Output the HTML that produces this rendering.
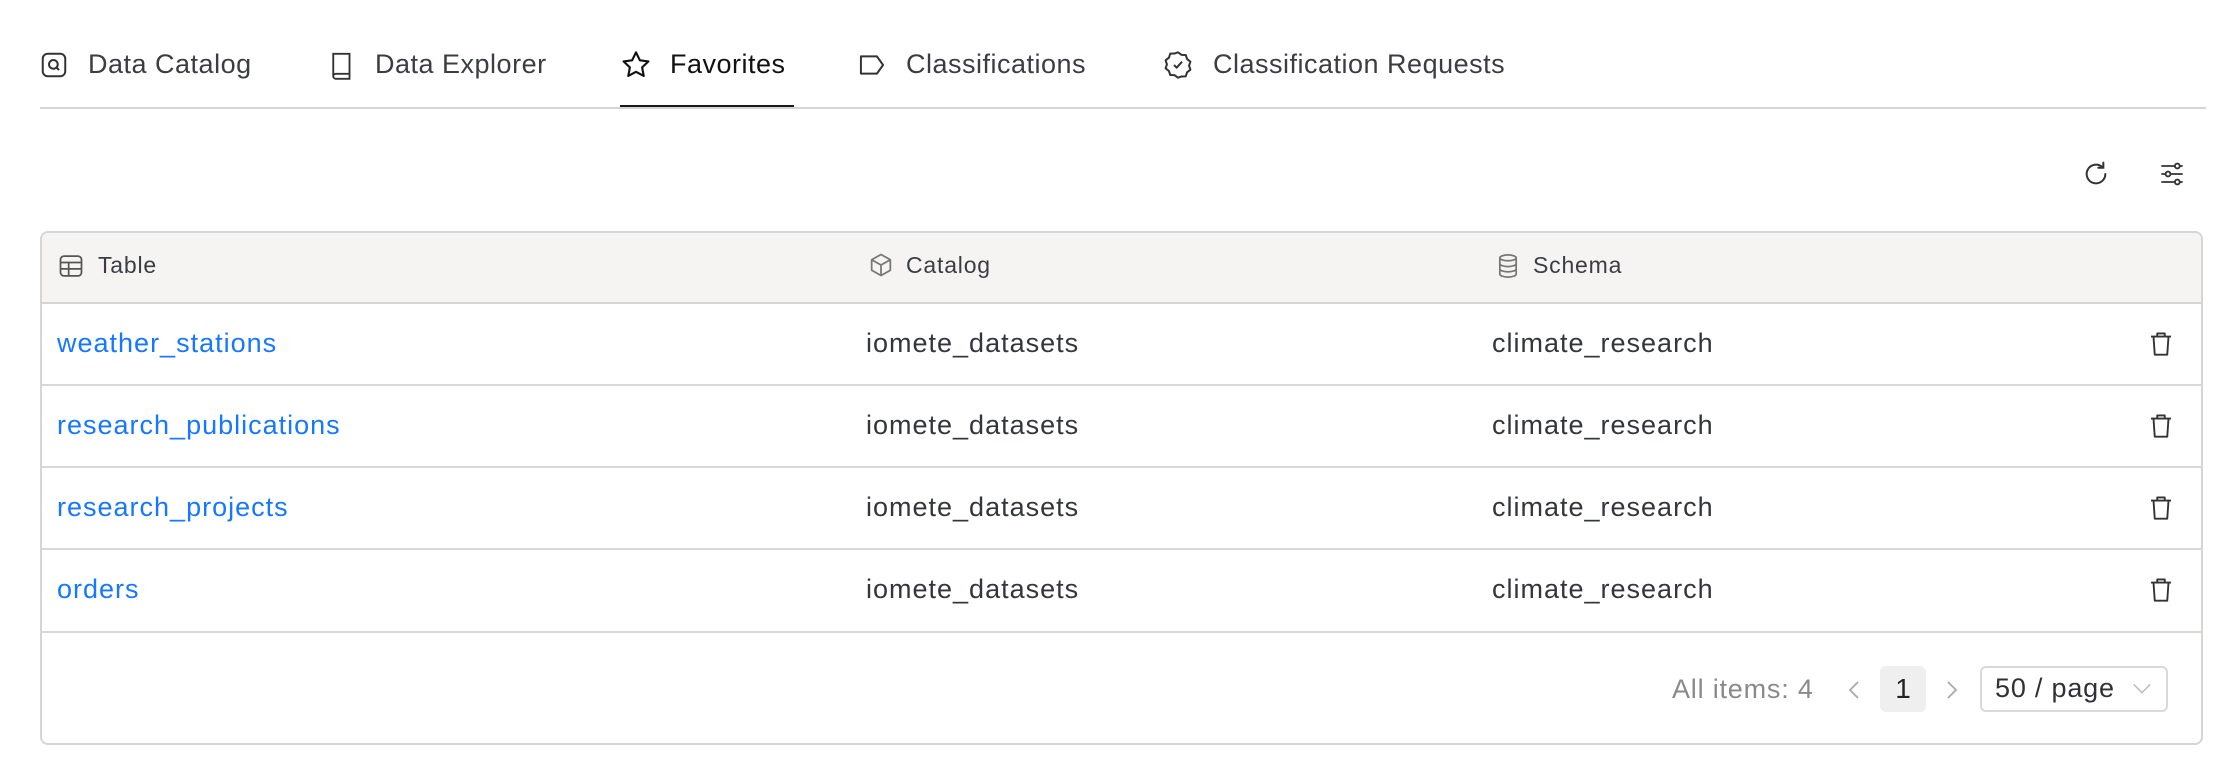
<!DOCTYPE html>
<html><head><meta charset="utf-8"><style>
*{margin:0;padding:0;box-sizing:border-box}
body{width:2220px;height:764px;background:#fff;font-family:"Liberation Sans",Arial,sans-serif;color:#2f3136;position:relative;overflow:hidden}
.a{position:absolute;white-space:nowrap}
.tab{font-size:27px;letter-spacing:0.5px;top:49px;color:#3a3d44}
svg{position:absolute}
.hd{font-size:23px;letter-spacing:0.8px;top:252px;color:#3a3d44}
.c{font-size:27px;letter-spacing:1px;color:#33363b}
.lk{color:#1677ff}
.hl{position:absolute;left:41px;width:2161px;height:2px;background:#d9d8d4}
</style></head><body>
<!-- tabs -->
<svg style="left:39px;top:50px" width="30" height="30" viewBox="0 0 24 24" fill="none" stroke="#333" stroke-width="1.6"><rect x="3" y="3" width="18" height="18" rx="4"/><circle cx="11.5" cy="11.5" r="3.5"/><path d="M14 14l2 2"/></svg>
<div class="a tab" style="left:88px">Data Catalog</div>
<svg style="left:327px;top:49px" width="30" height="32" viewBox="0 0 24 24" fill="none" stroke="#333" stroke-width="1.5"><path d="M5 3h13v16H7a2 2 0 0 0-2 2V3zM5 21a2 2 0 0 0 2 2h11v-4"/></svg>
<div class="a tab" style="left:375px">Data Explorer</div>
<svg style="left:620px;top:49px" width="32" height="32" viewBox="0 0 24 24" fill="none" stroke="#111" stroke-width="1.6" stroke-linejoin="round"><path d="M12 2.5l2.9 6 6.4.8-4.7 4.5 1.2 6.4L12 17.1l-5.8 3.1 1.2-6.4L2.7 9.3l6.4-.8z"/></svg>
<div class="a tab" style="left:670px;color:#111">Favorites</div>
<div class="a" style="left:620px;top:105px;width:174px;height:4px;background:#1b1b1b"></div>
<svg style="left:856px;top:50px" width="32" height="30" viewBox="0 0 26 24" fill="none" stroke="#333" stroke-width="1.6" stroke-linejoin="round"><path d="M4 5h13l5 7-5 7H4z"/></svg>
<div class="a tab" style="left:906px">Classifications</div>
<svg style="left:1162px;top:49px" width="32" height="32" viewBox="0 0 24 24" fill="none" stroke="#333" stroke-width="1.5" stroke-linejoin="round"><path d="M12 2.5l2.6 1.9 3.2.1 1 3 2.5 2-1 3 1 3-2.5 2-1 3-3.2.1L12 21.5l-2.6-1.9-3.2-.1-1-3-2.5-2 1-3-1-3 2.5-2 1-3 3.2-.1z"/><path d="M9 12l2 2 4-4.5"/></svg>
<div class="a tab" style="left:1213px">Classification Requests</div>
<div class="a" style="left:40px;top:107px;width:2166px;height:2px;background:#d6d5d1"></div>
<!-- toolbar icons -->
<svg style="left:2080px;top:158px" width="32" height="32" viewBox="0 0 24 24" fill="none" stroke="#333" stroke-width="1.5" stroke-linecap="round"><path d="M19 12a7 7 0 1 1-2.1-5"/><path d="M17.5 3.5v3.8h-3.8"/></svg>
<svg style="left:2156px;top:158px" width="32" height="32" viewBox="0 0 24 24" fill="none" stroke="#333" stroke-width="1.4"><path d="M4 6h10M18 6h2M4 12h3M11 12h9M4 18h10M18 18h2"/><circle cx="16" cy="6" r="1.8"/><circle cx="9" cy="12" r="1.8"/><circle cx="16" cy="18" r="1.8"/></svg>
<!-- table -->
<div class="a" style="left:40px;top:231px;width:2163px;height:514px;border:2px solid #d6d5d1;border-radius:8px;overflow:hidden">
<div style="height:71px;background:#f5f4f2;border-bottom:2px solid #d6d5d1"></div>
</div>
<svg style="left:57px;top:252px" width="28" height="28" viewBox="0 0 24 24" fill="none" stroke="#555" stroke-width="1.5"><rect x="3" y="3.5" width="18" height="17" rx="3"/><path d="M3 9h18M3 14.5h18M10 9v11.5"/></svg>
<div class="a hd" style="left:98px">Table</div>
<svg style="left:867px;top:251px" width="28" height="28" viewBox="0 0 24 24" fill="none" stroke="#777" stroke-width="1.5" stroke-linejoin="round"><path d="M12 3l8 4.5v9L12 21l-8-4.5v-9zM4 7.5l8 4.5 8-4.5M12 12v9"/></svg>
<div class="a hd" style="left:906px">Catalog</div>
<svg style="left:1494px;top:251px" width="28" height="30" viewBox="0 0 24 24" fill="none" stroke="#777" stroke-width="1.5"><ellipse cx="12" cy="5" rx="7" ry="2.5"/><path d="M5 5v14c0 1.4 3.1 2.5 7 2.5s7-1.1 7-2.5V5M5 10c0 1.4 3.1 2.5 7 2.5s7-1.1 7-2.5M5 14.5c0 1.4 3.1 2.5 7 2.5s7-1.1 7-2.5"/></svg>
<div class="a hd" style="left:1533px">Schema</div>

<div class="hl" style="top:384px"></div>
<div class="hl" style="top:466px"></div>
<div class="hl" style="top:548px"></div>
<div class="hl" style="top:631px"></div>

<div class="a c lk" style="left:57px;top:328px">weather_stations</div>
<div class="a c" style="left:866px;top:328px">iomete_datasets</div>
<div class="a c" style="left:1492px;top:328px">climate_research</div>
<div class="a c lk" style="left:57px;top:410px">research_publications</div>
<div class="a c" style="left:866px;top:410px">iomete_datasets</div>
<div class="a c" style="left:1492px;top:410px">climate_research</div>
<div class="a c lk" style="left:57px;top:492px">research_projects</div>
<div class="a c" style="left:866px;top:492px">iomete_datasets</div>
<div class="a c" style="left:1492px;top:492px">climate_research</div>
<div class="a c lk" style="left:57px;top:574px">orders</div>
<div class="a c" style="left:866px;top:574px">iomete_datasets</div>
<div class="a c" style="left:1492px;top:574px">climate_research</div>

<svg style="left:2146px;top:327px" width="30" height="34" viewBox="0 0 24 24" fill="none" stroke="#333" stroke-width="1.5" stroke-linejoin="round"><path d="M4 6h16M9 6V3.5h6V6M6 6l1 14.5h10L18 6"/></svg>
<svg style="left:2146px;top:409px" width="30" height="34" viewBox="0 0 24 24" fill="none" stroke="#333" stroke-width="1.5" stroke-linejoin="round"><path d="M4 6h16M9 6V3.5h6V6M6 6l1 14.5h10L18 6"/></svg>
<svg style="left:2146px;top:491px" width="30" height="34" viewBox="0 0 24 24" fill="none" stroke="#333" stroke-width="1.5" stroke-linejoin="round"><path d="M4 6h16M9 6V3.5h6V6M6 6l1 14.5h10L18 6"/></svg>
<svg style="left:2146px;top:573px" width="30" height="34" viewBox="0 0 24 24" fill="none" stroke="#333" stroke-width="1.5" stroke-linejoin="round"><path d="M4 6h16M9 6V3.5h6V6M6 6l1 14.5h10L18 6"/></svg>

<!-- pagination -->
<div class="a" style="left:1672px;top:674px;font-size:27px;letter-spacing:0.8px;color:#8a8a8a">All items: 4</div>
<svg style="left:1844px;top:677px" width="20" height="26" viewBox="0 0 20 26" fill="none" stroke="#aaa" stroke-width="1.8"><path d="M14 5l-8 8 8 8"/></svg>
<div class="a" style="left:1880px;top:666px;width:46px;height:46px;background:#efefef;border-radius:6px;font-size:28px;text-align:center;line-height:46px;color:#222">1</div>
<svg style="left:1942px;top:677px" width="20" height="26" viewBox="0 0 20 26" fill="none" stroke="#aaa" stroke-width="1.8"><path d="M6 5l8 8-8 8"/></svg>
<div class="a" style="left:1980px;top:666px;width:188px;height:46px;border:2px solid #d9d9d9;border-radius:6px"></div>
<div class="a" style="left:1995px;top:673px;font-size:27px;letter-spacing:0.8px;color:#2f3136">50 / page</div>
<svg style="left:2131px;top:680px" width="22" height="18" viewBox="0 0 24 18" fill="none" stroke="#bbb" stroke-width="1.6"><path d="M3 4l9 9 9-9"/></svg>
</body></html>
